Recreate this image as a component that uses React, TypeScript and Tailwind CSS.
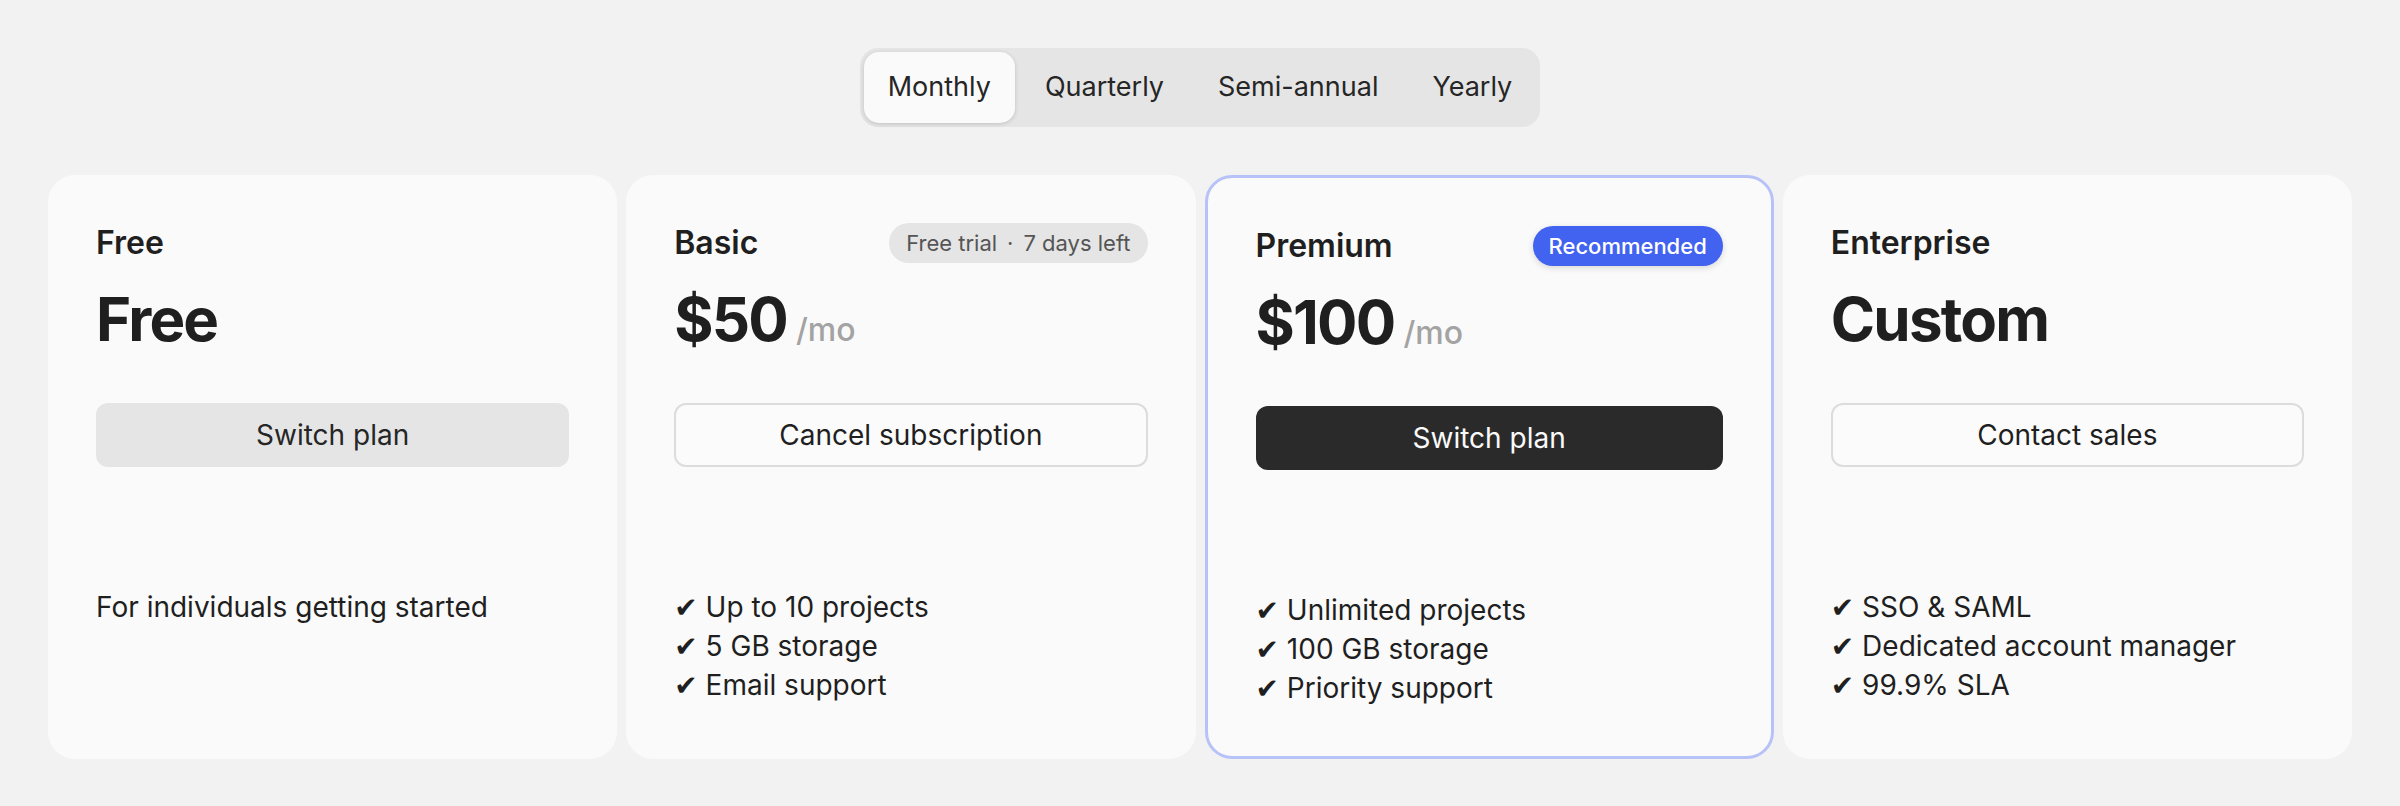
import React from "react";

type Plan = {
  label: string;
  price: string;
  per?: string;
  badge?: { text: React.ReactNode; kind: "trial" | "rec" };
  button: { text: string; kind: "muted" | "outline" | "dark" };
  features?: string[];
  description?: string;
  highlight?: boolean;
};

const plans: Plan[] = [
  {
    label: "Free",
    price: "Free",
    button: { text: "Switch plan", kind: "muted" },
    description: "For individuals getting started",
  },
  {
    label: "Basic",
    price: "$50",
    per: "/mo",
    badge: {
      kind: "trial",
      text: (
        <>
          Free trial<span className="mx-[10px]">·</span>7 days left
        </>
      ),
    },
    button: { text: "Cancel subscription", kind: "outline" },
    features: ["Up to 10 projects", "5 GB storage", "Email support"],
  },
  {
    label: "Premium",
    price: "$100",
    per: "/mo",
    badge: { kind: "rec", text: "Recommended" },
    button: { text: "Switch plan", kind: "dark" },
    features: ["Unlimited projects", "100 GB storage", "Priority support"],
    highlight: true,
  },
  {
    label: "Enterprise",
    price: "Custom",
    button: { text: "Contact sales", kind: "outline" },
    features: ["SSO & SAML", "Dedicated account manager", "99.9% SLA"],
  },
];

const tabs = ["Monthly", "Quarterly", "Semi-annual", "Yearly"];

function Card({ plan }: { plan: Plan }) {
  const btnCls =
    plan.button.kind === "muted"
      ? "bg-[#e5e5e5] text-[#262626]"
      : plan.button.kind === "dark"
      ? "bg-[#2a2a2a] text-[#fafafa]"
      : "border-2 border-[#dcdcdc] bg-[#fbfbfb] text-[#1f1f1f]";
  return (
    <div
      className={
        "flex flex-col rounded-[27px] bg-[#fafafa] p-12 " +
        (plan.highlight ? "border-[3px] border-[#b7c2f8]" : "")
      }
    >
      <div className="flex h-[40px] items-center justify-between">
        <div className="text-[32px] font-semibold leading-none text-[#1f1f1f]">{plan.label}</div>
        {plan.badge && plan.badge.kind === "trial" && (
          <div className="flex h-[40px] items-center rounded-full bg-[#e5e5e5] px-[17px] text-[22px] text-[#555555]">
            {plan.badge.text}
          </div>
        )}
        {plan.badge && plan.badge.kind === "rec" && (
          <div className="flex h-[40px] items-center rounded-full bg-[#4262f0] px-[16px] text-[22px] font-medium text-white shadow-[0_2px_6px_rgba(0,0,0,0.14)]">
            {plan.badge.text}
          </div>
        )}
      </div>
      <div className="mt-[26px] flex h-[60px] items-baseline gap-[9px]">
        <span className="text-[60px] font-bold leading-none tracking-[-0.03em] text-[#1f1f1f]">
          {plan.price}
        </span>
        {plan.per && (
          <span className="text-[32px] font-medium leading-none text-[#a3a3a3]">{plan.per}</span>
        )}
      </div>
      <button
        className={
          "mt-[54px] flex h-[64px] w-full items-center justify-center rounded-[12px] text-[28px] " + btnCls
        }
      >
        {plan.button.text}
      </button>
      <div className="mt-[121px] text-[28px] text-[#1f1f1f]">
        {plan.description && <div className="h-[39px] leading-[39px]">{plan.description}</div>}
        {plan.features &&
          plan.features.map((f) => (
            <div key={f} className="h-[39px] leading-[39px]">
              <span className="font-['DejaVu_Sans'] leading-none">✔</span> {f}
            </div>
          ))}
      </div>
    </div>
  );
}

export default function App() {
  return (
    <div className="min-h-screen bg-[#f2f2f2] px-12 pt-12 pb-12 font-[Inter,'DejaVu_Sans',sans-serif] text-[#1f1f1f]">
      <div className="flex justify-center">
        <div className="flex gap-[6px] rounded-[18px] bg-[#e5e5e5] p-[4px]">
          {tabs.map((t, i) => (
            <div
              key={t}
              className={
                "flex h-[71px] items-center rounded-[15px] px-6 text-[27px] text-[#262626] " +
                (i === 0 ? "bg-[#fafafa] shadow-[0_1px_4px_rgba(0,0,0,0.16)]" : "")
              }
            >
              {t}
            </div>
          ))}
        </div>
      </div>
      <div className="mt-12 grid grid-cols-4 gap-[9px]">
        {plans.map((p) => (
          <Card key={p.label} plan={p} />
        ))}
      </div>
    </div>
  );
}
